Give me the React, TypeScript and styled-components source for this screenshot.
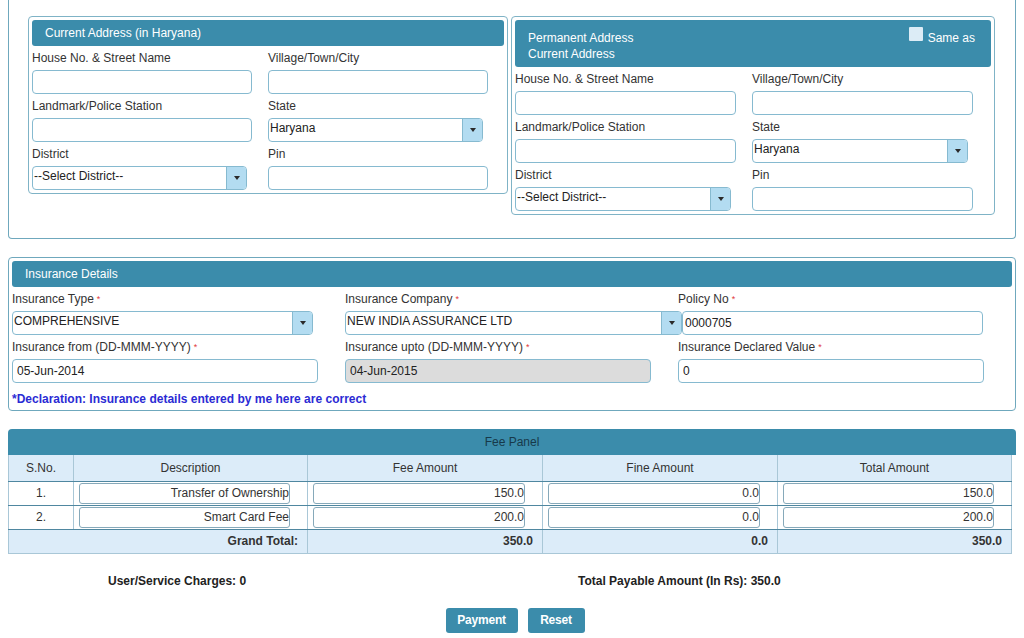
import React from "react";
import styled, { createGlobalStyle } from "styled-components";

const GlobalStyle = createGlobalStyle`
  body {
    margin: 0;
    background: #fff;
    font-family: "Liberation Sans", Arial, sans-serif;
    font-size: 12px;
    color: #333;
  }
  * { box-sizing: border-box; }
`;

const Page = styled.div`
  padding: 0 8px;
  width: 1024px;
`;

const Panel = styled.div<{ $noTop?: boolean }>`
  border: 1px solid #6fa8bd;
  border-top: ${(p) => (p.$noTop ? "none" : "1px solid #6fa8bd")};
  border-radius: ${(p) => (p.$noTop ? "0 0 4px 4px" : "4px")};
  padding: 3px;
  margin-top: ${(p) => (p.$noTop ? 0 : 18)}px;
`;

const AddressRow = styled.div`
  display: flex;
  align-items: flex-start;
  gap: 3px;
  padding: 13px 0 20px 16px;
`;

const AddressBox = styled.div<{ $w: number }>`
  width: ${(p) => p.$w}px;
  border: 1px solid #7fb3c6;
  border-radius: 4px;
  padding: 3px;
`;

const BarHead = styled.div<{ $tall?: boolean }>`
  display: flex;
  justify-content: space-between;
  align-items: flex-start;
  background: #3b8cab;
  color: #fff;
  border-radius: 3px;
  line-height: 16px;
  padding: ${(p) => (p.$tall ? "10px 16px 5px 13px" : "5px 13px")};
`;

const SameAs = styled.label`
  display: flex;
  align-items: flex-start;
  gap: 5px;
`;

const CheckSquare = styled.span`
  width: 14px;
  height: 14px;
  margin-top: -3px;
  background: #dcecf6;
  border-radius: 1px;
`;

const Grid = styled.div<{ $cols: string }>`
  display: grid;
  grid-template-columns: ${(p) => p.$cols};
`;

const Field = styled.div``;

const Label = styled.div`
  height: 24px;
  padding-top: 4px;
  line-height: 17px;
  color: #333;
  white-space: nowrap;
`;

const Req = styled.span`
  color: #e03a3a;
  font-size: 9px;
  margin-left: 3px;
  vertical-align: 1px;
`;

const TextBox = styled.input<{ $w: number; $shift?: number; $gray?: boolean; $pad?: number }>`
  display: block;
  width: ${(p) => p.$w}px;
  height: 24px;
  margin: 0 0 0 ${(p) => p.$shift || 0}px;
  border: 1px solid #86bad0;
  border-radius: 4px;
  padding: 0 4px 0 ${(p) => (p.$pad ?? 4)}px;
  background: ${(p) => (p.$gray ? "#dcdcdc" : "#fff")};
  font: 12px "Liberation Sans", Arial, sans-serif;
  color: #222;
  outline: none;
`;

const SelectBox = styled.div<{ $w: number }>`
  display: flex;
  width: ${(p) => p.$w}px;
  height: 24px;
  border: 1px solid #86bad0;
  border-radius: 4px;
  background: #fff;
  overflow: hidden;
`;

const SelectText = styled.span`
  flex: 1;
  padding-left: 1px;
  line-height: 18px;
  color: #222;
  white-space: nowrap;
  overflow: hidden;
`;

const SelectBtn = styled.span`
  width: 20px;
  display: flex;
  align-items: center;
  justify-content: center;
  background: #b3dcf1;
  border-left: 1px solid #86bad0;
  &::after {
    content: "";
    border-top: 4px solid #2a2a2a;
    border-left: 3px solid transparent;
    border-right: 3px solid transparent;
  }
`;

const Declaration = styled.div`
  margin-top: 8px;
  line-height: 16px;
  color: #2b2bd4;
  font-weight: bold;
`;

const FeeHead = styled.div`
  background: #3b8cab;
  color: #17394a;
  text-align: center;
  line-height: 26px;
  border-radius: 4px 4px 0 0;
  margin-top: 18px;
`;

const FeeTable = styled.table`
  width: 1004px;
  border-collapse: collapse;
  border-left: 1px solid #a9c7d7;
  border-right: 1px solid #a9c7d7;
  border-bottom: 1px solid #a9c7d7;
`;

const Th = styled.th<{ $w?: number }>`
  width: ${(p) => (p.$w ? `${p.$w}px` : "auto")};
  height: 26px;
  padding: 0;
  background: #dcecf9;
  font-weight: normal;
  color: #333;
  text-align: center;
  border-left: 1px solid #a9c7d7;
  border-bottom: 1px solid #4f87a0;
`;

const Td = styled.td<{ $right?: boolean; $total?: boolean }>`
  height: 24px;
  padding: 0 ${(p) => (p.$right ? 9 : 0)}px 0 0;
  text-align: ${(p) => (p.$right ? "right" : "center")};
  background: ${(p) => (p.$total ? "#dcecf9" : "#fff")};
  font-weight: ${(p) => (p.$total ? "bold" : "normal")};
  color: #333;
  border-left: 1px solid #a9c7d7;
  border-bottom: 1px solid ${(p) => (p.$total ? "#a9c7d7" : "#4f87a0")};
`;

const CellInput = styled.input`
  display: block;
  width: calc(100% - 22px);
  height: 21px;
  margin-left: 5px;
  border: 1px solid #86a9ba;
  border-radius: 3px;
  padding: 0;
  text-align: right;
  font: 12px "Liberation Sans", Arial, sans-serif;
  color: #333;
  background: #fff;
  outline: none;
`;

const Summary = styled.div`
  display: grid;
  grid-template-columns: 470px 1fr;
  padding-left: 100px;
  margin-top: 19px;
  line-height: 16px;
  font-weight: bold;
  color: #222;
`;

const Actions = styled.div`
  display: flex;
  justify-content: center;
  gap: 10px;
  margin-top: 19px;
  padding-left: 6px;
`;

const Button = styled.button<{ $w: number }>`
  width: ${(p) => p.$w}px;
  height: 25px;
  border: none;
  border-radius: 3px;
  background: #3b8cab;
  color: #fff;
  font: bold 12px "Liberation Sans", Arial, sans-serif;
  letter-spacing: -0.2px;
  cursor: pointer;
`;

type Ctl =
  | { kind: "text"; w: number; value?: string }
  | { kind: "select"; w: number; value: string };

function Control({ c }: { c: Ctl }) {
  if (c.kind === "select") {
    return (
      <SelectBox $w={c.w}>
        <SelectText>{c.value}</SelectText>
        <SelectBtn />
      </SelectBox>
    );
  }
  return <TextBox $w={c.w} defaultValue={c.value} />;
}

function AddressFields({ w, sw }: { w: number; sw: number }) {
  const rows: [string, Ctl, string, Ctl][] = [
    ["House No. & Street Name", { kind: "text", w }, "Village/Town/City", { kind: "text", w }],
    ["Landmark/Police Station", { kind: "text", w }, "State", { kind: "select", w: sw, value: "Haryana" }],
    ["District", { kind: "select", w: sw, value: "--Select District--" }, "Pin", { kind: "text", w }],
  ];
  return (
    <Grid $cols={`${w + 16}px 1fr`}>
      {rows.map(([l1, c1, l2, c2]) => (
        <React.Fragment key={l1}>
          <Field>
            <Label>{l1}</Label>
            <Control c={c1} />
          </Field>
          <Field>
            <Label>{l2}</Label>
            <Control c={c2} />
          </Field>
        </React.Fragment>
      ))}
    </Grid>
  );
}

const feeRows = [
  { no: "1.", desc: "Transfer of Ownership", fee: "150.0", fine: "0.0", total: "150.0" },
  { no: "2.", desc: "Smart Card Fee", fee: "200.0", fine: "0.0", total: "200.0" },
];

export default function App() {
  return (
    <Page>
      <GlobalStyle />
      <Panel $noTop>
        <AddressRow>
          <AddressBox $w={480}>
            <BarHead>Current Address (in Haryana)</BarHead>
            <AddressFields w={220} sw={215} />
          </AddressBox>
          <AddressBox $w={484}>
            <BarHead $tall>
              <span>
                Permanent Address
                <br />
                Current Address
              </span>
              <SameAs>
                <CheckSquare />
                Same as
              </SameAs>
            </BarHead>
            <AddressFields w={221} sw={216} />
          </AddressBox>
        </AddressRow>
      </Panel>

      <Panel>
        <BarHead>Insurance Details</BarHead>
        <Grid $cols="333px 333px 1fr">
          <Field>
            <Label>
              Insurance Type<Req>*</Req>
            </Label>
            <Control c={{ kind: "select", w: 301, value: "COMPREHENSIVE" }} />
          </Field>
          <Field>
            <Label>
              Insurance Company<Req>*</Req>
            </Label>
            <Control c={{ kind: "select", w: 337, value: "NEW INDIA ASSURANCE LTD" }} />
          </Field>
          <Field>
            <Label>
              Policy No<Req>*</Req>
            </Label>
            <TextBox $w={301} $shift={4} $pad={2} defaultValue="0000705" />
          </Field>
          <Field>
            <Label>
              Insurance from (DD-MMM-YYYY)<Req>*</Req>
            </Label>
            <TextBox $w={306} defaultValue="05-Jun-2014" />
          </Field>
          <Field>
            <Label>
              Insurance upto (DD-MMM-YYYY)<Req>*</Req>
            </Label>
            <TextBox $w={306} $gray readOnly defaultValue="04-Jun-2015" />
          </Field>
          <Field>
            <Label>
              Insurance Declared Value<Req>*</Req>
            </Label>
            <TextBox $w={306} defaultValue="0" />
          </Field>
        </Grid>
        <Declaration>*Declaration: Insurance details entered by me here are correct</Declaration>
      </Panel>

      <FeeHead>Fee Panel</FeeHead>
      <FeeTable>
        <thead>
          <tr>
            <Th $w={65}>S.No.</Th>
            <Th $w={234}>Description</Th>
            <Th $w={235}>Fee Amount</Th>
            <Th $w={235}>Fine Amount</Th>
            <Th>Total Amount</Th>
          </tr>
        </thead>
        <tbody>
          {feeRows.map((r) => (
            <tr key={r.no}>
              <Td>{r.no}</Td>
              <Td>
                <CellInput readOnly defaultValue={r.desc} />
              </Td>
              <Td>
                <CellInput readOnly defaultValue={r.fee} />
              </Td>
              <Td>
                <CellInput readOnly defaultValue={r.fine} />
              </Td>
              <Td>
                <CellInput readOnly defaultValue={r.total} />
              </Td>
            </tr>
          ))}
          <tr>
            <Td $total $right colSpan={2}>
              Grand Total:
            </Td>
            <Td $total $right>
              350.0
            </Td>
            <Td $total $right>
              0.0
            </Td>
            <Td $total $right>
              350.0
            </Td>
          </tr>
        </tbody>
      </FeeTable>

      <Summary>
        <span>User/Service Charges: 0</span>
        <span>Total Payable Amount (In Rs): 350.0</span>
      </Summary>
      <Actions>
        <Button $w={72}>Payment</Button>
        <Button $w={57}>Reset</Button>
      </Actions>
    </Page>
  );
}
